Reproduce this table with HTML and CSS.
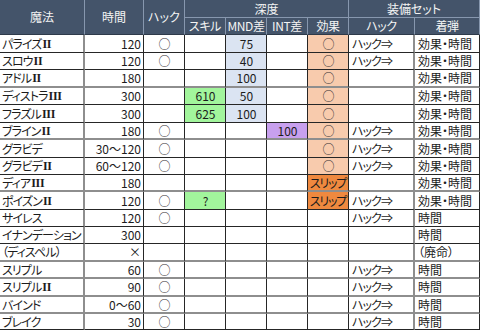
FILE: index.html
```html
<!DOCTYPE html>
<html lang="ja">
<head>
<meta charset="utf-8">
<link rel="stylesheet" href="styles.css">
</head>
<body>
<div class="sheet">
  <div class="head">
    <div class="hc r2">魔法</div>
    <div class="hc r2">時間</div>
    <div class="hc r2">ハック</div>
    <div class="hc c4">深度</div>
    <div class="hc c2">装備セット</div>
    <div class="hc sub">スキル</div>
    <div class="hc sub">MND差</div>
    <div class="hc sub">INT差</div>
    <div class="hc sub">効果</div>
    <div class="hc sub">ハック</div>
    <div class="hc sub">着弾</div>
  </div>

  <div class="row tall">
    <div class="l">パライズ<span class="rn">II</span></div><div class="r">120</div><div class="c o">○</div><div></div><div class="c lav">75</div><div></div><div class="c peach o">○</div><div class="l k">ハック⇒</div><div class="l">効果・時間</div>
  </div>
  <div class="row">
    <div class="l">スロウ<span class="rn">II</span></div><div class="r">120</div><div class="c o">○</div><div></div><div class="c lav">40</div><div></div><div class="c peach o">○</div><div class="l k">ハック⇒</div><div class="l">効果・時間</div>
  </div>
  <div class="row tall g">
    <div class="l">アドル<span class="rn">II</span></div><div class="r">180</div><div></div><div></div><div class="c lav">100</div><div></div><div class="c peach o">○</div><div></div><div class="l">効果・時間</div>
  </div>
  <div class="row">
    <div class="l">ディストラ<span class="rn">III</span></div><div class="r">300</div><div></div><div class="c green">610</div><div class="c lav">50</div><div></div><div class="c peach o">○</div><div></div><div class="l">効果・時間</div>
  </div>
  <div class="row tall">
    <div class="l">フラズル<span class="rn">III</span></div><div class="r">300</div><div></div><div class="c green">625</div><div class="c lav">100</div><div></div><div class="c peach o">○</div><div></div><div class="l">効果・時間</div>
  </div>
  <div class="row g">
    <div class="l">ブライン<span class="rn">II</span></div><div class="r">180</div><div class="c o">○</div><div></div><div></div><div class="c purple">100</div><div class="c peach o">○</div><div class="l k">ハック⇒</div><div class="l">効果・時間</div>
  </div>
  <div class="row tall">
    <div class="l">グラビデ</div><div class="r">30～120</div><div class="c o">○</div><div></div><div></div><div></div><div class="c peach o">○</div><div class="l k">ハック⇒</div><div class="l">効果・時間</div>
  </div>
  <div class="row">
    <div class="l">グラビデ<span class="rn">II</span></div><div class="r">60～120</div><div class="c o">○</div><div></div><div></div><div></div><div class="c peach o">○</div><div class="l k">ハック⇒</div><div class="l">効果・時間</div>
  </div>
  <div class="row g">
    <div class="l">ディア<span class="rn">III</span></div><div class="r">180</div><div></div><div></div><div></div><div></div><div class="c orange">スリップ</div><div></div><div class="l">効果・時間</div>
  </div>
  <div class="row tall">
    <div class="l">ポイズン<span class="rn">II</span></div><div class="r">120</div><div class="c o">○</div><div class="c green">?</div><div></div><div></div><div class="c orange">スリップ</div><div class="l k">ハック⇒</div><div class="l">効果・時間</div>
  </div>
  <div class="row">
    <div class="l">サイレス</div><div class="r">120</div><div class="c o">○</div><div></div><div></div><div></div><div></div><div class="l k">ハック⇒</div><div class="l">時間</div>
  </div>
  <div class="row">
    <div class="l">イナンデーション</div><div class="r">300</div><div></div><div></div><div></div><div></div><div></div><div></div><div class="l">時間</div>
  </div>
  <div class="row tall g">
    <div class="l">（ディスペル）</div><div class="r">×</div><div></div><div></div><div></div><div></div><div></div><div></div><div class="l">（廃命）</div>
  </div>
  <div class="row g">
    <div class="l">スリプル</div><div class="r">60</div><div class="c o">○</div><div></div><div></div><div></div><div></div><div class="l k">ハック⇒</div><div class="l">時間</div>
  </div>
  <div class="row tall g">
    <div class="l">スリプル<span class="rn">II</span></div><div class="r">90</div><div class="c o">○</div><div></div><div></div><div></div><div></div><div class="l k">ハック⇒</div><div class="l">時間</div>
  </div>
  <div class="row g">
    <div class="l">バインド</div><div class="r">0～60</div><div class="c o">○</div><div></div><div></div><div></div><div></div><div class="l k">ハック⇒</div><div class="l">時間</div>
  </div>
  <div class="row short">
    <div class="l">ブレイク</div><div class="r">30</div><div class="c o">○</div><div></div><div></div><div></div><div></div><div class="l k">ハック⇒</div><div class="l">時間</div>
  </div>
</div>
</body>
</html>
```

FILE: styles.css
```css
html, body {
  margin: 0;
  padding: 0;
  background: #ffffff;
}
body {
  font-family: "Noto Sans CJK JP", "Noto Sans", sans-serif;
  font-size: 12px;
  color: #1c1c1c;
  font-feature-settings: "palt";
}
.sheet {
  width: 480px;
  display: flex;
  flex-direction: column;
}
.head {
  display: grid;
  grid-template-columns: 85px 59px 41px 41px 41px 41px 41px 66px 65px;
  grid-template-rows: 18px 17px;
  background: #44546a;
  color: #f4f4f4;
}
.hc {
  box-sizing: border-box;
  display: flex;
  align-items: center;
  justify-content: center;
  border-right: 1px solid #8797ae;
  border-bottom: 1px solid #8797ae;
  white-space: nowrap;
  overflow: hidden;
  line-height: 1;
}
.hc.r2 { grid-row: span 2; border-bottom-color: #2e3a4a; }
.hc.c4 { grid-column: span 4; }
.hc.c2 { grid-column: span 2; }
.hc.sub { border-bottom-color: #2e3a4a; letter-spacing: -0.4px; }

.row {
  display: grid;
  grid-template-columns: 85px 59px 41px 41px 41px 41px 41px 66px 65px;
  height: 17px;
}
.row.tall { height: 18px; }
.row.short { height: 16px; }
.row > div {
  box-sizing: border-box;
  display: flex;
  align-items: center;
  padding: 0 2px 0 3px;
  border-right: 1px solid #262626;
  border-bottom: 1px solid #262626;
  white-space: nowrap;
  overflow: hidden;
  line-height: 1;
}
.row > div:nth-child(1),
.row > div:nth-child(8) {
  border-right: 2px solid #8e8e8e;
}
.row > div:nth-child(1) {
  letter-spacing: -0.9px;
  padding-left: 2px;
}
.row.g > div {
  border-bottom: 2px solid #8e8e8e;
}
.l { justify-content: flex-start; }
.r { justify-content: flex-end; }
.c { justify-content: center; }
.k { letter-spacing: -0.9px; }
.o { font-size: 12px; color: #333; }
.rn {
  font-family: "Liberation Serif", serif;
  font-weight: bold;
  font-size: 12px;
  letter-spacing: -0.3px;
  margin-left: 1px;
}
.lav { background: #dbe4f2; }
.green { background: #a2f59c; }
.purple { background: #c8a0ee; }
.peach { background: #f8cbad; }
.row > .orange {
  background: #ef893f;
  letter-spacing: -1.2px;
  padding: 0;
}
```
